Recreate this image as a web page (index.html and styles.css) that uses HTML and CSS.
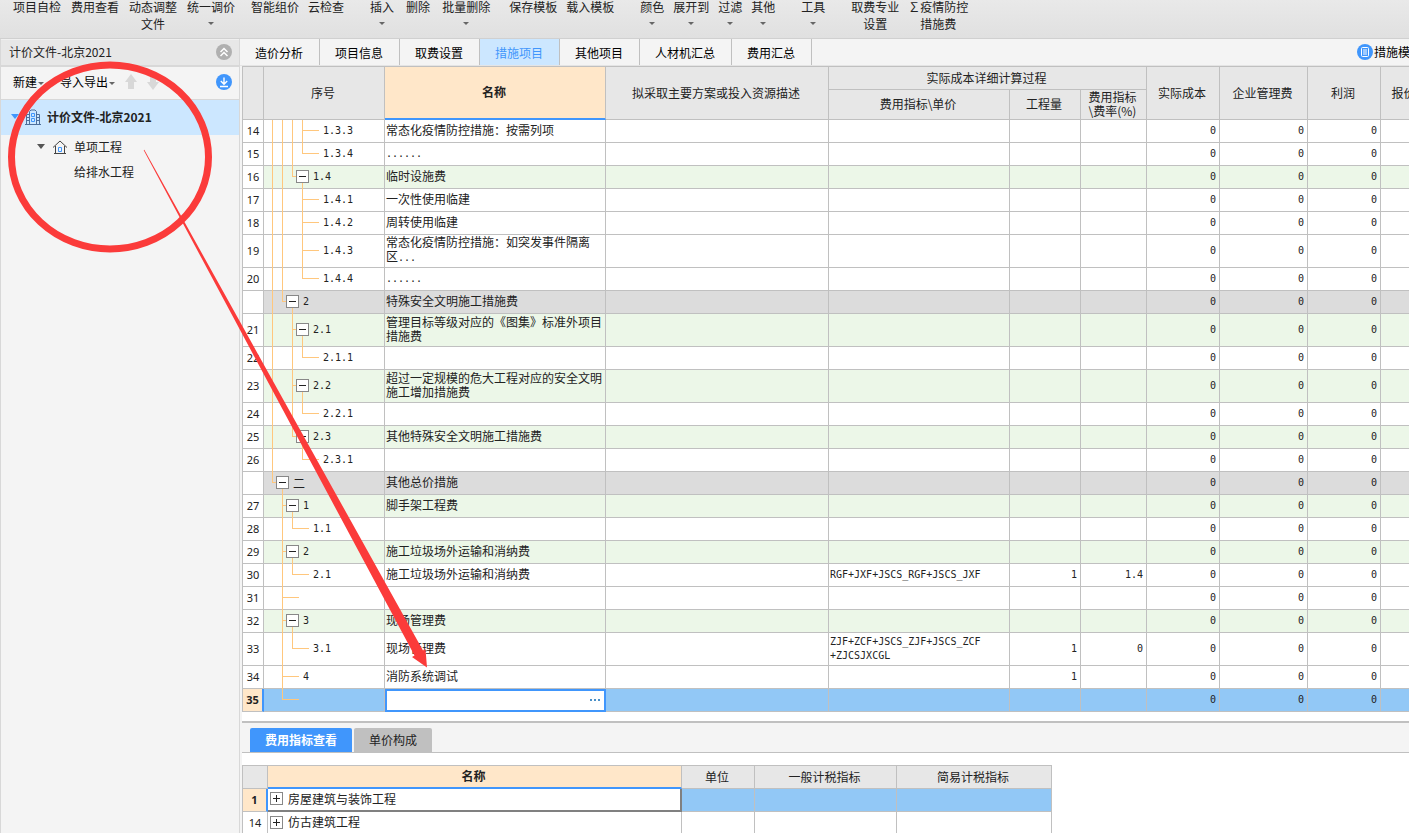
FILE: index.html
```html
<!DOCTYPE html>
<html lang="zh-CN">
<head>
<meta charset="utf-8">
<title>计价文件-北京2021</title>
<link rel="stylesheet" href="styles.css">
</head>
<body>
<header class="ribbon">
  <div class="group roomy"><button>项目自检</button><button>费用查看</button><button>动态调整<br>文件</button><button>统一调价<i class="caret"></i></button></div>
  <div class="group"><button>智能组价</button><button>云检查</button></div>
  <div class="group far loose"><button>插入<i class="caret"></i></button><button>删除</button><button>批量删除<i class="caret"></i></button></div>
  <div class="group"><button>保存模板</button><button>载入模板</button></div>
  <div class="group far"><button>颜色<i class="caret"></i></button><button>展开到<i class="caret"></i></button><button>过滤<i class="caret"></i></button><button>其他<i class="caret"></i></button></div>
  <div class="group far"><button>工具<i class="caret"></i></button></div>
  <div class="group far"><button>取费专业<br>设置</button><button>∑疫情防控<br>措施费</button></div>
</header>
<div class="body">
  <aside class="side">
    <div class="side-head"><span>计价文件-北京2021</span>
      <button aria-label="收起"><svg width="16" height="16" viewBox="0 0 16 16"><circle cx="8" cy="8" r="8" fill="#b0b0b0"/><path d="M4.500 8 8 4.500 11.500 8M4.500 12 8 8.500 11.500 12" fill="none" stroke="#fff" stroke-width="1.500"/></svg></button>
    </div>
    <div class="side-tools">
      <button>新建<i class="caret"></i></button>
      <button class="io">导入导出<i class="caret"></i></button>
      <button class="move" aria-label="上移"><svg width="12" height="16" viewBox="0 0 12 16"><path d="M6 0 12 8H9V15H3V8H0Z" fill="#d8d8d8"/></svg></button>
      <button class="move" aria-label="下移"><svg width="12" height="16" viewBox="0 0 12 16"><path d="M6 16 0 8H3V1H9V8H12Z" fill="#d8d8d8"/></svg></button>
      <button class="end" aria-label="下载"><svg width="16" height="16" viewBox="0 0 16 16"><circle cx="8" cy="8" r="8" fill="#4096fc"/><path d="M8 3.500V10M4.800 7 8 10.200 11.200 7M4 12.500H12" fill="none" stroke="#fff" stroke-width="1.400"/></svg></button>
    </div>
    <ul class="nav">
      <li class="nav-item root"><i class="tri"></i><svg width="16" height="16" viewBox="0 0 16 16" fill="none" stroke="#4d6f9c"><path d="M0 15.500H16M4.500 15V2.500L6 1H10L11.500 2.500V15M4 5.500H1.500V15M12 5.500H14.500V15M2 8.500H4M2 11.500H4M12 8.500H14M12 11.500H14"/><path d="M6.500 4.500H9.500V7.500H6.500ZM6.500 9.500H9.500V12.500H6.500Z" stroke="#4096fc"/></svg><span>计价文件-北京2021</span></li>
      <li class="nav-item unit"><i class="tri"></i><svg width="14" height="14" viewBox="0 0 14 14" fill="none" stroke="#444"><path d="M0 7.500 7 1 14 7.500M2.500 6V13M11.500 6V13M1 13.500H13"/><path d="M5.500 7.500H8.500V11.500H5.500Z" stroke="#4096fc"/></svg><span>单项工程</span></li>
      <li class="nav-item leaf"><span>给排水工程</span></li>
    </ul>
  </aside>
  <main class="work">
    <nav class="tabs">
      <button>造价分析</button><button>项目信息</button><button>取费设置</button><button class="on">措施项目</button><button>其他项目</button><button>人材机汇总</button><button>费用汇总</button>
      <a class="tpl" href="#"><svg width="16" height="16" viewBox="0 0 16 16"><circle cx="8" cy="8" r="8" fill="#4096fc"/><rect x="4.500" y="3.500" width="7" height="9" rx="1" fill="none" stroke="#fff"/><path d="M6 6H10M6 8H10M6 10H10" stroke="#fff"/></svg>措施模板</a>
    </nav>
    <section class="sheet">
      <table class="grid main-grid">
        <colgroup><col class="c-no"><col class="c-seq"><col class="c-name"><col class="c-plan"><col class="c-expr"><col class="c-qty"><col class="c-rate"><col class="c-cost"><col class="c-mgmt"><col class="c-cost"><col class="c-bid"></colgroup>
        <thead>
          <tr><th rowspan="2"></th><th rowspan="2">序号</th><th rowspan="2" class="cur">名称</th><th rowspan="2">拟采取主要方案或投入资源描述</th><th colspan="3">实际成本详细计算过程</th><th rowspan="2">实际成本</th><th rowspan="2">企业管理费</th><th rowspan="2">利润</th><th rowspan="2">报价</th></tr>
          <tr class="sub"><th>费用指标\单价</th><th>工程量</th><th>费用指标<br>\费率(%)</th></tr>
        </thead>
        <tbody>
          <tr><td>14</td><td><div class="tree"><i class="v"></i><i class="v"></i><i class="v"></i><i class="t end"></i>1.3.3</div></td><td>常态化疫情防控措施：按需列项</td><td></td><td></td><td></td><td></td><td>0</td><td>0</td><td>0</td><td></td></tr>
          <tr><td>15</td><td><div class="tree"><i class="v"></i><i class="v"></i><i class="v"></i><i class="l end"></i>1.3.4</div></td><td><span class="mono">......</span></td><td></td><td></td><td></td><td></td><td>0</td><td>0</td><td>0</td><td></td></tr>
          <tr class="green"><td>16</td><td><div class="tree"><i class="v"></i><i class="v"></i><i class="l near"></i><button class="fold" aria-label="折叠"></button>1.4</div></td><td>临时设施费</td><td></td><td></td><td></td><td></td><td>0</td><td>0</td><td>0</td><td></td></tr>
          <tr><td>17</td><td><div class="tree"><i class="v"></i><i class="v"></i><i></i><i class="t end"></i>1.4.1</div></td><td>一次性使用临建</td><td></td><td></td><td></td><td></td><td>0</td><td>0</td><td>0</td><td></td></tr>
          <tr><td>18</td><td><div class="tree"><i class="v"></i><i class="v"></i><i></i><i class="t end"></i>1.4.2</div></td><td>周转使用临建</td><td></td><td></td><td></td><td></td><td>0</td><td>0</td><td>0</td><td></td></tr>
          <tr class="tall"><td>19</td><td><div class="tree"><i class="v"></i><i class="v"></i><i></i><i class="t end"></i>1.4.3</div></td><td>常态化疫情防控措施：如突发事件隔离<br>区<span class="mono">...</span></td><td></td><td></td><td></td><td></td><td>0</td><td>0</td><td>0</td><td></td></tr>
          <tr><td>20</td><td><div class="tree"><i class="v"></i><i class="v"></i><i></i><i class="l end"></i>1.4.4</div></td><td><span class="mono">......</span></td><td></td><td></td><td></td><td></td><td>0</td><td>0</td><td>0</td><td></td></tr>
          <tr class="gray"><td></td><td><div class="tree"><i class="v"></i><i class="l near"></i><button class="fold" aria-label="折叠"></button>2</div></td><td>特殊安全文明施工措施费</td><td></td><td></td><td></td><td></td><td>0</td><td>0</td><td>0</td><td></td></tr>
          <tr class="green tall"><td>21</td><td><div class="tree"><i class="v"></i><i></i><i class="t near"></i><button class="fold" aria-label="折叠"></button>2.1</div></td><td>管理目标等级对应的《图集》标准外项目措施费</td><td></td><td></td><td></td><td></td><td>0</td><td>0</td><td>0</td><td></td></tr>
          <tr><td>22</td><td><div class="tree"><i class="v"></i><i></i><i class="v"></i><i class="l end"></i>2.1.1</div></td><td></td><td></td><td></td><td></td><td></td><td>0</td><td>0</td><td>0</td><td></td></tr>
          <tr class="green tall"><td>23</td><td><div class="tree"><i class="v"></i><i></i><i class="t near"></i><button class="fold" aria-label="折叠"></button>2.2</div></td><td>超过一定规模的危大工程对应的安全文明施工增加措施费</td><td></td><td></td><td></td><td></td><td>0</td><td>0</td><td>0</td><td></td></tr>
          <tr><td>24</td><td><div class="tree"><i class="v"></i><i></i><i class="v"></i><i class="l end"></i>2.2.1</div></td><td></td><td></td><td></td><td></td><td></td><td>0</td><td>0</td><td>0</td><td></td></tr>
          <tr class="green"><td>25</td><td><div class="tree"><i class="v"></i><i></i><i class="l near"></i><button class="fold" aria-label="折叠"></button>2.3</div></td><td>其他特殊安全文明施工措施费</td><td></td><td></td><td></td><td></td><td>0</td><td>0</td><td>0</td><td></td></tr>
          <tr><td>26</td><td><div class="tree"><i class="v"></i><i></i><i></i><i class="l end"></i>2.3.1</div></td><td></td><td></td><td></td><td></td><td></td><td>0</td><td>0</td><td>0</td><td></td></tr>
          <tr class="gray"><td></td><td><div class="tree"><i class="l near"></i><button class="fold" aria-label="折叠"></button><span class="han">二</span></div></td><td>其他总价措施</td><td></td><td></td><td></td><td></td><td>0</td><td>0</td><td>0</td><td></td></tr>
          <tr class="green"><td>27</td><td><div class="tree"><i></i><i class="t near"></i><button class="fold" aria-label="折叠"></button>1</div></td><td>脚手架工程费</td><td></td><td></td><td></td><td></td><td>0</td><td>0</td><td>0</td><td></td></tr>
          <tr><td>28</td><td><div class="tree"><i></i><i class="v"></i><i class="l end"></i>1.1</div></td><td></td><td></td><td></td><td></td><td></td><td>0</td><td>0</td><td>0</td><td></td></tr>
          <tr class="green"><td>29</td><td><div class="tree"><i></i><i class="t near"></i><button class="fold" aria-label="折叠"></button>2</div></td><td>施工垃圾场外运输和消纳费</td><td></td><td></td><td></td><td></td><td>0</td><td>0</td><td>0</td><td></td></tr>
          <tr><td>30</td><td><div class="tree"><i></i><i class="v"></i><i class="l end"></i>2.1</div></td><td>施工垃圾场外运输和消纳费</td><td></td><td>RGF+JXF+JSCS_RGF+JSCS_JXF</td><td>1</td><td>1.4</td><td>0</td><td>0</td><td>0</td><td></td></tr>
          <tr><td>31</td><td><div class="tree"><i></i><i class="t end"></i></div></td><td></td><td></td><td></td><td></td><td></td><td>0</td><td>0</td><td>0</td><td></td></tr>
          <tr class="green"><td>32</td><td><div class="tree"><i></i><i class="t near"></i><button class="fold" aria-label="折叠"></button>3</div></td><td>现场管理费</td><td></td><td></td><td></td><td></td><td>0</td><td>0</td><td>0</td><td></td></tr>
          <tr class="tall"><td>33</td><td><div class="tree"><i></i><i class="v"></i><i class="l end"></i>3.1</div></td><td>现场管理费</td><td></td><td>ZJF+ZCF+JSCS_ZJF+JSCS_ZCF<br>+ZJCSJXCGL</td><td>1</td><td>0</td><td>0</td><td>0</td><td>0</td><td></td></tr>
          <tr><td>34</td><td><div class="tree"><i></i><i class="t end"></i>4</div></td><td>消防系统调试</td><td></td><td></td><td>1</td><td></td><td>0</td><td>0</td><td>0</td><td></td></tr>
          <tr class="sel"><td>35</td><td><div class="tree"><i></i><i class="l end"></i></div></td><td class="edit"><div class="editor"><input type="text" aria-label="名称"><button class="more" aria-label="更多"><i></i><i></i><i></i></button></div></td><td></td><td></td><td></td><td></td><td>0</td><td>0</td><td>0</td><td></td></tr>
        </tbody>
      </table>
    </section>
    <nav class="sub-tabs"><button class="on">费用指标查看</button><button>单价构成</button></nav>
    <section class="sheet lower">
      <table class="grid index-grid">
        <colgroup><col class="k-no"><col class="k-name"><col class="k-unit"><col class="k-gen"><col class="k-simple"></colgroup>
        <thead><tr><th></th><th class="cur">名称</th><th>单位</th><th>一般计税指标</th><th>简易计税指标</th></tr></thead>
        <tbody>
          <tr class="sel"><td>1</td><td class="focus"><div class="entry"><button class="fold plus" aria-label="展开"></button>房屋建筑与装饰工程</div></td><td></td><td></td><td></td></tr>
          <tr><td>14</td><td><div class="entry"><button class="fold plus" aria-label="展开"></button>仿古建筑工程</div></td><td></td><td></td><td></td></tr>
        </tbody>
      </table>
    </section>
  </main>
</div>
<svg class="marks" width="440" height="680" viewBox="0 0 440 680" aria-hidden="true">
  <ellipse cx="110" cy="157" rx="98.500" ry="92" fill="none" stroke="#fb3b3a" stroke-width="7"/>
  <path d="M143.700 150.200 144.300 149.800 423 650.500 425.500 649 427 667.500 412 657 414.500 655.500Z" fill="#fb3b3a"/>
</svg>
</body>
</html>
```
FILE: styles.css
```css
* { box-sizing: border-box; }
body {
  margin: 0;
  height: 100vh;
  display: flex;
  flex-direction: column;
  overflow: hidden;
  background: #f4f4f4;
  color: #222;
  font: 12px/16px "Noto Sans CJK SC", sans-serif;
}
button, input { font: inherit; color: inherit; border: 0; padding: 0; margin: 0; background: none; }
svg { display: block; flex: none; }

.caret {
  display: block;
  width: 6px;
  margin: 7px auto 0;
  border: 3px solid transparent;
  border-top-color: #666;
  border-bottom: 0;
}

/* ribbon, scrolled slightly under the window's top edge */
.ribbon {
  flex: none;
  height: 39px;
  display: flex;
  align-items: flex-start;
  padding-left: 13px;
  background: linear-gradient(#e9e9e9, #e0e0e0);
  border-bottom: 1px solid #d0d0d0;
  white-space: nowrap;
}
.group { display: flex; align-items: flex-start; gap: 9px; margin-top: -2px; }
.group + .group { margin-left: 19px; }
.group.roomy { gap: 10px; }
.group.roomy + .group { margin-left: 16px; }
.group + .group.far { margin-left: 26px; }
.group.loose { gap: 12px; }
.ribbon button { line-height: 17px; text-align: center; }

.body { flex: 1; min-height: 0; display: flex; }

/* sidebar */
.side { flex: none; width: 240px; border: solid #d8d8d8; border-width: 0 1px; }
.side-head {
  height: 28px;
  display: flex;
  align-items: center;
  justify-content: space-between;
  padding: 0 7px 2px 8px;
  background: #e7e7e7;
  border-top: 1px solid #f0f0f0;
  border-bottom: 2px solid #d8d8d8;
}
.side-tools {
  height: 33px;
  display: flex;
  align-items: center;
  padding: 0 7px 2px 12px;
  border-bottom: 1px solid #d8d8d8;
  color: #000;
}
.side-tools button { display: flex; align-items: center; gap: 1px; }
.side-tools .caret { margin: 2px 0 0; }
.side-tools .io { margin-left: 16px; }
.side-tools .move { margin-left: 10px; }
.side-tools .end { margin-left: auto; }
.nav { list-style: none; margin: 0; padding: 0; }
.nav-item { height: 25px; display: flex; align-items: center; gap: 7px; padding-bottom: 2px; }
.nav-item .tri { border: 4px solid transparent; border-top: 5px solid #555; border-bottom: 0; }
.nav-item.root { height: 35px; padding-left: 10px; gap: 6px; background: #cce7ff; font-weight: 700; }
.nav-item.root .tri { border-top-color: #4096fc; }
.nav-item.unit { padding-left: 36px; }
.nav-item.unit .tri { margin-right: 1px; }
.nav-item.leaf { padding-left: 73px; }

/* work area */
.work { flex: 1; min-width: 0; display: flex; flex-direction: column; }
.tabs { flex: none; height: 27px; display: flex; border-bottom: 1px solid #e4e4e4; color: #000; white-space: nowrap; }
.tabs button { padding: 2px 16px 0 15px; border-right: 1px solid #c0c0c0; }
.tabs .on { background: #cce7ff; color: #4096fc; }
.tpl {
  width: 52px;
  margin-left: auto;
  display: flex;
  align-items: center;
  gap: 1px;
  overflow: hidden;
  color: inherit;
  text-decoration: none;
}
.sheet { flex: none; margin-left: 2px; overflow: hidden; background: #fff; }

/* grids */
.grid { border-collapse: separate; border-spacing: 0; table-layout: fixed; border-top: 1px solid #c0c0c0; }
.main-grid { width: 1187px; margin-bottom: 9px; }
.c-no { width: 22px; } .c-seq { width: 121px; } .c-name { width: 221px; } .c-plan { width: 223px; }
.c-expr { width: 181px; } .c-qty { width: 71px; } .c-rate { width: 66px; } .c-cost { width: 73px; }
.c-mgmt { width: 88px; } .c-bid { width: 48px; }
.grid th, .grid td {
  height: 23px;
  padding: 0 3px 2px 1px;
  border: solid #c0c0c0;
  border-width: 0 1px 1px 0;
  line-height: 14px;
}
.grid th { padding: 0 2px 1px 0; background: #e7e7e7; font-weight: 400; }
.grid .sub th { height: 30px; }
.grid th.cur { background: #ffe7c9; font-weight: 700; border-bottom: 2px solid #4096fc; }
.grid th:first-child, .grid td:first-child { border-left-width: 1px; }
.grid .sub th:first-child { border-left-width: 0; }
.grid td:first-child { padding: 0; text-align: center; background: #fff; font: 11px/14px "Noto Sans", sans-serif; }
.grid .tall td { height: 33px; }
.main-grid td:nth-child(2) { padding: 0; }
.main-grid td:nth-child(n+5), .mono, .tree { font-family: "DejaVu Sans Mono", monospace; font-size: 10px; }
.main-grid td:nth-child(n+5) { padding-bottom: 0; }
.main-grid td:nth-child(n+6) { text-align: right; }
.green td { background: #ecf7e8; }
.gray td { background: #dcdcdc; }
.sel td { background: #92c8f6; }
.grid .sel td:first-child { background: #ffe7c9; font-weight: 700; border-right: 2px solid #4096fc; }

/* outline guides */
.tree { height: 100%; display: flex; align-items: center; padding: 0 0 1px 8px; }
.tree > i { flex: none; align-self: stretch; position: relative; width: 10px; margin-bottom: -2px; }
.tree > .v, .tree > .t { border-left: 1px solid #ffc77d; }
.tree > .t::after, .tree > .l::after {
  content: "";
  position: absolute;
  inset: 0 0 calc(50% + 1px) 0;
  border-bottom: 1px solid #ffc77d;
}
.tree > .l::after { border-left: 1px solid #ffc77d; }
.tree > .end { width: 17px; margin-right: 4px; }
.tree > .near { width: 4px; }
.han { font-family: "Noto Sans CJK SC", sans-serif; font-size: 12px; }
.fold {
  flex: none;
  position: relative;
  width: 13px;
  height: 13px;
  margin-right: 5px;
  border: 1px solid #888;
  background: linear-gradient(#222, #222) center / 7px 1px no-repeat #fff;
}
.fold.plus {
  background: linear-gradient(#222, #222) center / 7px 1px no-repeat, linear-gradient(#222, #222) center / 1px 7px no-repeat, #fff;
}
.tree .fold { margin-right: 4px; }
.tree .fold::after { content: ""; position: absolute; top: 12px; left: 5px; height: 6px; border-left: 1px solid #ffc77d; }
.green.tall .fold::after { height: 11px; }

.grid td.edit { padding: 0; background: #fff; outline: 2px solid #4096fc; outline-offset: -2px; }
.editor { display: flex; align-items: center; padding: 0 5px 0 4px; }
.editor input { flex: 1; min-width: 0; height: 16px; outline: 0; }
.more { display: flex; gap: 2px; }
.more i { width: 2px; height: 2px; background: #4a90c8; }

/* lower pane */
.sub-tabs {
  flex: none;
  height: 32px;
  display: flex;
  align-items: flex-end;
  gap: 2px;
  margin-left: 2px;
  padding-left: 8px;
  border-top: 2px solid #c0c0c0;
  border-bottom: 1px solid #c0c0c0;
}
.sub-tabs button { height: 24px; padding: 0 15px; border-radius: 2px 2px 0 0; background: #c0c0c0; }
.sub-tabs .on { background: #4096fc; color: #fff; font-weight: 700; }
.lower { flex: 1; padding-top: 12px; }
.index-grid { width: 810px; }
.k-no { width: 26px; } .k-name { width: 414px; } .k-unit { width: 73px; } .k-gen { width: 142px; } .k-simple { width: 155px; }
.entry { display: flex; align-items: center; padding-left: 1px; }
.grid td.focus { background: #fff; border-right: 2px solid #808080; border-bottom: 2px solid #808080; }

/* hand-drawn annotation above the page */
.marks { position: absolute; top: 0; left: 0; pointer-events: none; }
```
